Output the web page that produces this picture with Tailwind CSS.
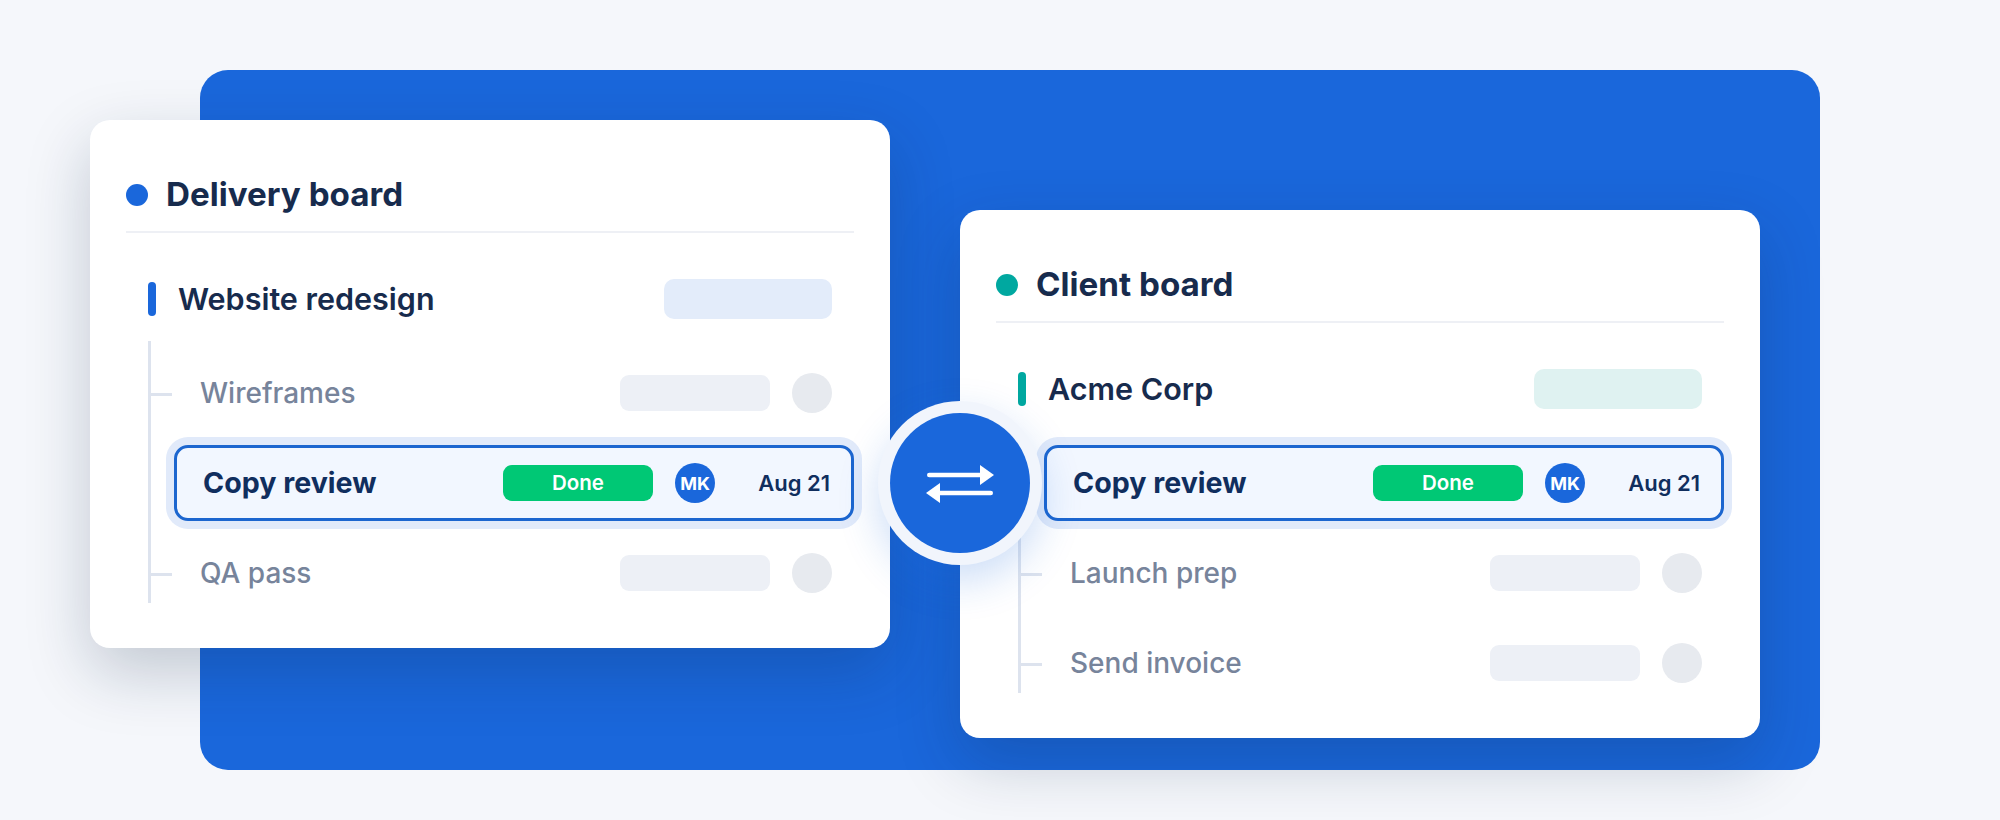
<!DOCTYPE html>
<html lang="en">
<head>
    <meta charset="UTF-8">
    <title>Board sync</title>
    <script src="https://cdn.jsdelivr.net/npm/@tailwindcss/browser@4"></script>
</head>
<body class="w-[2000px] h-[820px] overflow-hidden bg-[#f5f7fb] font-['Inter',sans-serif]">
<div class="relative w-[2000px] h-[820px]">
    <!-- Blue panel -->
    <div class="absolute left-[200px] top-[70px] w-[1620px] h-[700px] rounded-[28px] bg-[#1a67db]"></div>

    <!-- Delivery board -->
    <div class="absolute left-[90px] top-[120px] w-[800px] h-[528px] px-9 bg-white rounded-[20px] shadow-[0_24px_64px_rgba(15,35,70,0.22)]">
        <div class="flex items-center gap-[18px] h-[113px] pt-[38px] border-b-2 border-[#eef0f5]">
            <span class="w-[22px] h-[22px] rounded-full bg-[#1a67db]"></span>
            <h2 class="text-[33.2px] font-bold text-[#172b4d]">Delivery board</h2>
        </div>
        <div class="flex items-center h-[40px] mt-[46px] pl-[22px] pr-[22px]">
            <span class="w-2 h-[34px] rounded bg-[#1a67db]"></span>
            <span class="ml-[22px] text-[30.5px] font-semibold text-[#172b4d]">Website redesign</span>
            <span class="ml-auto w-[168px] h-10 rounded-[10px] bg-[#e3ecfa]"></span>
        </div>
        <div class="mt-[22px] ml-[22px] w-[684px] h-[262px] pt-[7px] border-l-[3px] border-[#dde3ee]">
            <div class="flex items-center h-[90px] pl-[49px] relative">
                <span class="absolute left-0 top-[45px] w-[21px] h-[3px] bg-[#dde3ee]"></span>
                <span class="text-[28px] font-medium text-[#77849b]">Wireframes</span>
                <span class="ml-auto w-[150px] h-9 rounded-[9px] bg-[#edf0f6]"></span>
                <span class="ml-[22px] w-10 h-10 rounded-full bg-[#e7eaef]"></span>
            </div>
            <div class="h-[90px]"></div>
            <div class="flex items-center h-[90px] pl-[49px] relative">
                <span class="absolute left-0 top-[45px] w-[21px] h-[3px] bg-[#dde3ee]"></span>
                <span class="text-[28px] font-medium text-[#77849b]">QA pass</span>
                <span class="ml-auto w-[150px] h-9 rounded-[9px] bg-[#edf0f6]"></span>
                <span class="ml-[22px] w-10 h-10 rounded-full bg-[#e7eaef]"></span>
            </div>
        </div>
    </div>

    <!-- Client board -->
    <div class="absolute left-[960px] top-[210px] w-[800px] h-[528px] px-9 bg-white rounded-[20px] shadow-[0_24px_64px_rgba(15,35,70,0.22)]">
        <div class="flex items-center gap-[18px] h-[113px] pt-[38px] border-b-2 border-[#eef0f5]">
            <span class="w-[22px] h-[22px] rounded-full bg-[#00a8a0]"></span>
            <h2 class="text-[33.2px] font-bold text-[#172b4d]">Client board</h2>
        </div>
        <div class="flex items-center h-[40px] mt-[46px] pl-[22px] pr-[22px]">
            <span class="w-2 h-[34px] rounded bg-[#00a8a0]"></span>
            <span class="ml-[22px] text-[30.5px] font-semibold text-[#172b4d]">Acme Corp</span>
            <span class="ml-auto w-[168px] h-10 rounded-[10px] bg-[#dff2f1]"></span>
        </div>
        <div class="mt-[22px] ml-[22px] w-[684px] h-[262px] pt-[7px] border-l-[3px] border-[#dde3ee]">
            <div class="h-[90px]"></div>
            <div class="flex items-center h-[90px] pl-[49px] relative">
                <span class="absolute left-0 top-[45px] w-[21px] h-[3px] bg-[#dde3ee]"></span>
                <span class="text-[28px] font-medium text-[#77849b]">Launch prep</span>
                <span class="ml-auto w-[150px] h-9 rounded-[9px] bg-[#edf0f6]"></span>
                <span class="ml-[22px] w-10 h-10 rounded-full bg-[#e7eaef]"></span>
            </div>
            <div class="flex items-center h-[90px] pl-[49px] relative">
                <span class="absolute left-0 top-[45px] w-[21px] h-[3px] bg-[#dde3ee]"></span>
                <span class="text-[28px] font-medium text-[#77849b]">Send invoice</span>
                <span class="ml-auto w-[150px] h-9 rounded-[9px] bg-[#edf0f6]"></span>
                <span class="ml-[22px] w-10 h-10 rounded-full bg-[#e7eaef]"></span>
            </div>
        </div>
    </div>

    <!-- Highlighted rows -->
    <div class="absolute left-[174px] top-[445px] w-[680px] h-[76px] flex items-center pl-[26px] pr-[21px] rounded-[14px] border-[3px] border-[#1c66cf] bg-[#f2f7ff] ring-8 ring-[#e1eafa]">
        <span class="pt-px text-[28.6px] font-bold text-[#102e5e]">Copy review</span>
        <span class="ml-auto w-[150px] h-9 pt-px flex items-center justify-center rounded-[9px] bg-[#00c875] text-white text-[20.5px] font-semibold">Done</span>
        <span class="ml-[22px] w-10 h-10 flex items-center justify-center rounded-full bg-[#1a67db] text-white text-[18px] font-bold">MK</span>
        <span class="ml-[38px] w-[77px] pt-px text-right text-[22px] font-semibold text-[#102e5e] whitespace-nowrap">Aug 21</span>
    </div>
    <div class="absolute left-[1044px] top-[445px] w-[680px] h-[76px] flex items-center pl-[26px] pr-[21px] rounded-[14px] border-[3px] border-[#1c66cf] bg-[#f2f7ff] ring-8 ring-[#e1eafa]">
        <span class="pt-px text-[28.6px] font-bold text-[#102e5e]">Copy review</span>
        <span class="ml-auto w-[150px] h-9 pt-px flex items-center justify-center rounded-[9px] bg-[#00c875] text-white text-[20.5px] font-semibold">Done</span>
        <span class="ml-[22px] w-10 h-10 flex items-center justify-center rounded-full bg-[#1a67db] text-white text-[18px] font-bold">MK</span>
        <span class="ml-[38px] w-[77px] pt-px text-right text-[22px] font-semibold text-[#102e5e] whitespace-nowrap">Aug 21</span>
    </div>

    <!-- Swap button -->
    <div class="absolute left-[878px] top-[401px] w-[164px] h-[164px] flex items-center justify-center rounded-full bg-[#f1f5fc] shadow-[0_16px_40px_rgba(26,103,219,0.22)]">
        <div class="w-[140px] h-[140px] flex items-center justify-center rounded-full bg-[#1a67db]">
            <svg class="mt-[2px]" width="68" height="38" viewBox="0 0 68 38" fill="#fff">
                <rect x="1" y="7.7" width="55" height="4.6" rx="2.3"/>
                <polygon points="54,0 68,10 54,20"/>
                <rect x="12" y="25.7" width="55" height="4.6" rx="2.3"/>
                <polygon points="14,18 0,28 14,38"/>
            </svg>
        </div>
    </div>
</div>
</body>
</html>
